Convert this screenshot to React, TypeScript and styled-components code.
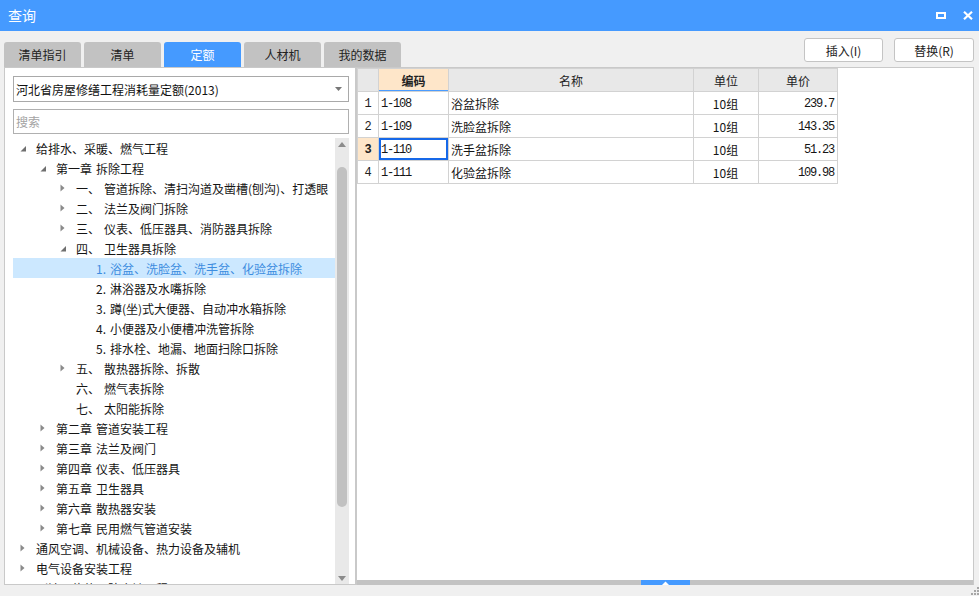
import React from "react";
import styled, { createGlobalStyle, css } from "styled-components";

const GlobalStyle = createGlobalStyle`
  html, body { margin: 0; padding: 0; background: #f0f0f0; }
  body { font-family: "Noto Sans CJK SC", "Noto Sans", sans-serif; }
  * { box-sizing: border-box; }
`;

const Window = styled.div`
  position: relative;
  width: 979px;
  height: 596px;
  background: #f0f0f0;
  display: flex;
  flex-direction: column;
  overflow: hidden;
  font-family: "Noto Sans CJK SC", "Noto Sans", sans-serif;
`;

const TitleBar = styled.div`
  height: 31px;
  flex: none;
  background: #459aff;
  display: flex;
  align-items: center;
  justify-content: space-between;
  padding: 0 6px 0 8px;
`;

const Title = styled.div`
  color: #fff;
  font-size: 14px;
  line-height: 31px;
`;

const TitleIcons = styled.div`
  display: flex;
  align-items: center;
  gap: 17px;
`;

const Toolbar = styled.div`
  height: 36px;
  flex: none;
  display: flex;
  justify-content: space-between;
  padding: 0 5px 0 4px;
`;

const TabStrip = styled.div`
  align-self: flex-end;
  display: flex;
  gap: 3px;
`;

const Tab = styled.div<{ $active?: boolean }>`
  width: 77px;
  height: 25px;
  border-radius: 3px 3px 0 0;
  background: ${(p) => (p.$active ? "#459aff" : "#c2c2c2")};
  color: ${(p) => (p.$active ? "#fff" : "#222")};
  font-size: 12px;
  display: flex;
  align-items: center;
  justify-content: center;
`;

const ButtonGroup = styled.div`
  margin-top: 7px;
  display: flex;
  gap: 11px;
  align-self: flex-start;
`;

const ActionButton = styled.div<{ $w: number }>`
  width: ${(p) => p.$w}px;
  height: 24px;
  background: #fff;
  border: 1px solid #c4c4c4;
  border-radius: 3px;
  font-size: 12px;
  color: #222;
  display: flex;
  align-items: center;
  justify-content: center;
`;

const Main = styled.div`
  height: 518px;
  flex: none;
  display: flex;
  padding: 0 5px 0 4px;
`;

const LeftPanel = styled.div`
  width: 352px;
  flex: none;
  background: #fff;
  border: 1px solid #c9c9c9;
  display: flex;
  flex-direction: column;
  padding: 8px 6px 0 8px;
`;

const Select = styled.div`
  height: 26px;
  flex: none;
  border: 1px solid #a9a9a9;
  display: flex;
  align-items: center;
  justify-content: space-between;
  padding: 0 6px 0 2px;
  font-size: 12px;
  color: #111;
`;

const SearchBox = styled.div`
  margin-top: 7px;
  height: 25px;
  flex: none;
  border: 1px solid #b0b0b0;
  display: flex;
  align-items: center;
  padding-left: 2px;
  font-size: 12px;
  color: #a3a3a3;
`;

const TreeArea = styled.div`
  margin-top: 4px;
  flex: 1;
  display: flex;
  min-height: 0;
`;

const TreeList = styled.div`
  flex: 1;
  overflow: hidden;
  min-width: 0;
`;

const Row = styled.div<{ $level: number; $selected?: boolean }>`
  height: 20px;
  display: flex;
  align-items: center;
  padding-left: ${(p) => 7 + p.$level * 20}px;
  font-size: 12px;
  line-height: 19px;
  white-space: nowrap;
  color: #151515;
  ${(p) =>
    p.$selected &&
    css`
      background: #cce8ff;
      color: #3d8de0;
    `}
`;

const ArrowBox = styled.span`
  width: 16px;
  flex: none;
  display: flex;
  align-items: center;
  height: 20px;
`;

const Prefix = styled.span`
  margin-right: 4px;
`;

const VScroll = styled.div`
  width: 14px;
  flex: none;
  background: #e9e9e9;
  display: flex;
  flex-direction: column;
  align-items: center;
`;

const ScrollArrow = styled.div`
  height: 12px;
  flex: none;
  display: flex;
  align-items: center;
  justify-content: center;
`;

const VThumb = styled.div`
  width: 10px;
  height: 340px;
  margin-top: 17px;
  border-radius: 5px;
  background: #c1c1c1;
`;

const Spacer = styled.div`
  flex: 1;
`;

const RightPanel = styled.div`
  flex: 1;
  background: #fff;
  border: 1px solid #c9c9c9;
  border-bottom: none;
  display: flex;
  flex-direction: column;
  min-width: 0;
`;

const TableArea = styled.div`
  flex: 1;
  overflow: hidden;
`;

const Grid = styled.table`
  border-collapse: collapse;
  table-layout: fixed;
  width: 481px;
  font-size: 12px;
`;

const HeadCell = styled.th<{ $focus?: boolean }>`
  height: 23px;
  padding: 0;
  border: 1px solid #d2d2d2;
  background: ${(p) => (p.$focus ? "#fee6c9" : "#e8e8e8")};
  font-weight: ${(p) => (p.$focus ? 700 : 400)};
  color: #222;
  text-align: center;
  ${(p) =>
    p.$focus &&
    css`
      box-shadow: inset 0 -1px 0 #4a9cff;
    `}
`;

const NumCell = styled.td<{ $current?: boolean }>`
  height: 23px;
  padding: 2px 0 0;
  border: 1px solid #d2d2d2;
  text-align: center;
  font-family: "Liberation Mono", monospace;
  font-size: 12px;
  color: #222;
  background: ${(p) => (p.$current ? "#fee6c9" : "#fff")};
  font-weight: ${(p) => (p.$current ? 700 : 400)};
`;

const Cell = styled.td<{ $align?: "left" | "center" | "right"; $mono?: boolean; $active?: boolean }>`
  height: 23px;
  padding: 0 3px 0 2px;
  border: 1px solid #d2d2d2;
  text-align: ${(p) => p.$align || "left"};
  color: #151515;
  white-space: nowrap;
  overflow: hidden;
  ${(p) =>
    p.$mono &&
    css`
      font-family: "Liberation Mono", monospace;
      font-size: 12px;
      letter-spacing: -1.2px;
      padding-top: 2px;
    `}
  ${(p) =>
    p.$active &&
    css`
      box-shadow: inset 0 0 0 2px #1668e8;
    `}
`;

const HBar = styled.div`
  height: 5px;
  flex: none;
  background: #c3c3c3;
  display: flex;
  justify-content: center;
`;

const HThumb = styled.div`
  width: 49px;
  height: 5px;
  background: #459aff;
  display: flex;
  align-items: center;
  justify-content: center;
`;

const Grip = styled.svg`
  position: absolute;
  right: 0;
  bottom: 1px;
`;

type Node = {
  level: number;
  arrow?: "open" | "closed";
  prefix?: string;
  text: string;
  selected?: boolean;
};

const nodes: Node[] = [
  { level: 0, arrow: "open", text: "给排水、采暖、燃气工程" },
  { level: 1, arrow: "open", prefix: "第一章", text: "拆除工程" },
  { level: 2, arrow: "closed", prefix: "一、", text: "管道拆除、清扫沟道及凿槽(刨沟)、打透眼" },
  { level: 2, arrow: "closed", prefix: "二、", text: "法兰及阀门拆除" },
  { level: 2, arrow: "closed", prefix: "三、", text: "仪表、低压器具、消防器具拆除" },
  { level: 2, arrow: "open", prefix: "四、", text: "卫生器具拆除" },
  { level: 3, prefix: "1.", text: "浴盆、洗脸盆、洗手盆、化验盆拆除", selected: true },
  { level: 3, prefix: "2.", text: "淋浴器及水嘴拆除" },
  { level: 3, prefix: "3.", text: "蹲(坐)式大便器、自动冲水箱拆除" },
  { level: 3, prefix: "4.", text: "小便器及小便槽冲洗管拆除" },
  { level: 3, prefix: "5.", text: "排水栓、地漏、地面扫除口拆除" },
  { level: 2, arrow: "closed", prefix: "五、", text: "散热器拆除、拆散" },
  { level: 2, prefix: "六、", text: "燃气表拆除" },
  { level: 2, prefix: "七、", text: "太阳能拆除" },
  { level: 1, arrow: "closed", prefix: "第二章", text: "管道安装工程" },
  { level: 1, arrow: "closed", prefix: "第三章", text: "法兰及阀门" },
  { level: 1, arrow: "closed", prefix: "第四章", text: "仪表、低压器具" },
  { level: 1, arrow: "closed", prefix: "第五章", text: "卫生器具" },
  { level: 1, arrow: "closed", prefix: "第六章", text: "散热器安装" },
  { level: 1, arrow: "closed", prefix: "第七章", text: "民用燃气管道安装" },
  { level: 0, arrow: "closed", text: "通风空调、机械设备、热力设备及辅机" },
  { level: 0, arrow: "closed", text: "电气设备安装工程" },
  { level: 0, arrow: "closed", text: "刷油、绝热、防腐蚀工程" },
];

const rows = [
  { n: 1, code: "1-108", name: "浴盆拆除", unit: "10组", price: "239.7" },
  { n: 2, code: "1-109", name: "洗脸盆拆除", unit: "10组", price: "143.35" },
  { n: 3, code: "1-110", name: "洗手盆拆除", unit: "10组", price: "51.23" },
  { n: 4, code: "1-111", name: "化验盆拆除", unit: "10组", price: "109.98" },
];

const Arrow = ({ kind }: { kind?: "open" | "closed" }) => {
  if (kind === "closed")
    return (
      <svg width="6" height="8" viewBox="0 0 6 8">
        <path d="M0.5 0.5 L4.5 4 L0.5 7.5 Z" fill="#8a8a8a" />
      </svg>
    );
  if (kind === "open")
    return (
      <svg width="7" height="10" viewBox="0 0 7 10">
        <path d="M6 3 L6 8.5 L0.5 8.5 Z" fill="#6f6f6f" />
      </svg>
    );
  return null;
};

export default function App() {
  return (
    <Window>
      <GlobalStyle />
      <TitleBar>
        <Title>查询</Title>
        <TitleIcons>
          <svg width="10" height="8" viewBox="0 0 10 8">
            <rect x="1" y="1" width="8" height="5" fill="none" stroke="#fff" strokeWidth="2" />
          </svg>
          <svg width="10" height="9" viewBox="0 0 10 9">
            <path d="M1 0.8 L9 8.2 M9 0.8 L1 8.2" stroke="#fff" strokeWidth="2.2" />
          </svg>
        </TitleIcons>
      </TitleBar>

      <Toolbar>
        <TabStrip>
          <Tab>清单指引</Tab>
          <Tab>清单</Tab>
          <Tab $active>定额</Tab>
          <Tab>人材机</Tab>
          <Tab>我的数据</Tab>
        </TabStrip>
        <ButtonGroup>
          <ActionButton $w={79}>插入(I)</ActionButton>
          <ActionButton $w={80}>替换(R)</ActionButton>
        </ButtonGroup>
      </Toolbar>

      <Main>
        <LeftPanel>
          <Select>
            <span>河北省房屋修缮工程消耗量定额(2013)</span>
            <svg width="7" height="4" viewBox="0 0 7 4">
              <path d="M0 0 L7 0 L3.5 4 Z" fill="#777" />
            </svg>
          </Select>
          <SearchBox>搜索</SearchBox>
          <TreeArea>
            <TreeList>
              {nodes.map((n, i) => (
                <Row key={i} $level={n.level} $selected={n.selected}>
                  <ArrowBox>
                    <Arrow kind={n.arrow} />
                  </ArrowBox>
                  {n.prefix && <Prefix>{n.prefix}</Prefix>}
                  <span>{n.text}</span>
                </Row>
              ))}
            </TreeList>
            <VScroll>
              <ScrollArrow>
                <svg width="8" height="5" viewBox="0 0 8 5">
                  <path d="M0 5 L8 5 L4 0 Z" fill="#8c8c8c" />
                </svg>
              </ScrollArrow>
              <VThumb />
              <Spacer />
              <ScrollArrow>
                <svg width="8" height="5" viewBox="0 0 8 5">
                  <path d="M0 0 L8 0 L4 5 Z" fill="#8c8c8c" />
                </svg>
              </ScrollArrow>
            </VScroll>
          </TreeArea>
        </LeftPanel>

        <RightPanel>
          <TableArea>
            <Grid>
              <colgroup>
                <col style={{ width: 21 }} />
                <col style={{ width: 70 }} />
                <col style={{ width: 245 }} />
                <col style={{ width: 65 }} />
                <col style={{ width: 79 }} />
              </colgroup>
              <thead>
                <tr>
                  <HeadCell />
                  <HeadCell $focus>编码</HeadCell>
                  <HeadCell>名称</HeadCell>
                  <HeadCell>单位</HeadCell>
                  <HeadCell>单价</HeadCell>
                </tr>
              </thead>
              <tbody>
                {rows.map((r) => (
                  <tr key={r.n}>
                    <NumCell $current={r.n === 3}>{r.n}</NumCell>
                    <Cell $mono $active={r.n === 3}>{r.code}</Cell>
                    <Cell>{r.name}</Cell>
                    <Cell $align="center">{r.unit}</Cell>
                    <Cell $align="right" $mono>{r.price}</Cell>
                  </tr>
                ))}
              </tbody>
            </Grid>
          </TableArea>
          <HBar>
            <HThumb>
              <svg width="7" height="4" viewBox="0 0 7 4">
                <path d="M0 4 L7 4 L3.5 0.5 Z" fill="#fff" />
              </svg>
            </HThumb>
          </HBar>
        </RightPanel>
      </Main>

      <Grip width="8" height="8" viewBox="0 0 8 8">
        <rect x="6" y="0" width="2" height="2" fill="#a6a6a6" />
        <rect x="3" y="3" width="2" height="2" fill="#a6a6a6" />
        <rect x="6" y="3" width="2" height="2" fill="#a6a6a6" />
        <rect x="0" y="6" width="2" height="2" fill="#a6a6a6" />
        <rect x="3" y="6" width="2" height="2" fill="#a6a6a6" />
        <rect x="6" y="6" width="2" height="2" fill="#a6a6a6" />
      </Grip>
    </Window>
  );
}
